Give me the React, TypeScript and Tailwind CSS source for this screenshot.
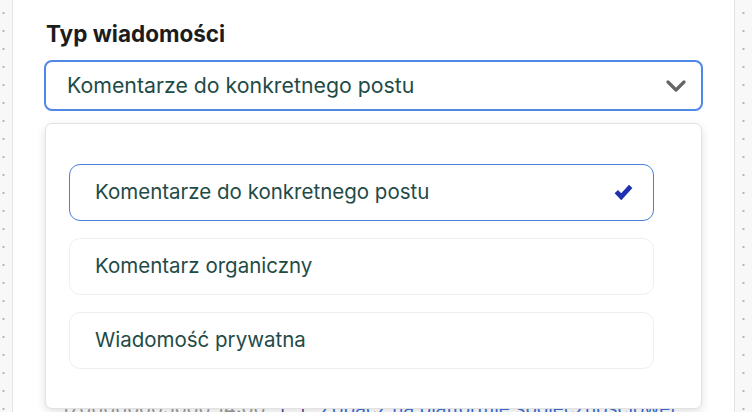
import { useState } from "react"

const options = [
  "Komentarze do konkretnego postu",
  "Komentarz organiczny",
  "Wiadomość prywatna",
]

function Chevron() {
  return (
    <svg width="20" height="12" viewBox="0 0 20 12" fill="none">
      <path d="M2 2l8 8 8-8" stroke="#666" strokeWidth="3.2" strokeLinecap="round" strokeLinejoin="round" />
    </svg>
  )
}

function Check() {
  return (
    <svg width="19" height="17" viewBox="0 0 19 17">
      <path d="M0.6 9.2l3.4-3.2 3.2 3.3L15 0.8l3.4 3.1L7.3 16.2z" fill="#1f30b3" />
    </svg>
  )
}

export default function App() {
  const [selected, setSelected] = useState(0)

  return (
    <div className="flex h-[412px] w-[752px] overflow-hidden bg-white font-['Inter',sans-serif]">
      <div className="w-[13px] shrink-0 border-r border-[#e3e3e3] bg-[#f8f8f8] bg-[radial-gradient(circle,#b4b4b4_0.9px,transparent_1.3px)] bg-[length:7px_18px] bg-[position:0px_4px] bg-repeat-y" />

      <div className="relative flex-1 px-[31px] pt-[20px]">
        <h2 className="pl-[2px] text-[22.5px] font-bold leading-[28px] text-[#1c1c1c]">Typ wiadomości</h2>

        <div className="relative mt-[12px]">
          <button className="flex h-[51px] w-full items-center justify-between rounded-[8px] border-2 border-[#4f88e6] bg-white pl-[21px] pr-[15px] text-left">
            <span className="text-[21.3px] text-[#1f4b47]">{options[selected]}</span>
            <Chevron />
          </button>

          <div className="absolute left-[1px] right-[1px] top-[63px] z-10 rounded-[7px] border border-[#e2e2e2] bg-white pb-[39px] pl-[23px] pr-[47px] pt-[40px] shadow-[0_3px_10px_rgba(0,0,0,0.12)]">
            <ul className="flex flex-col gap-[17px]">
              {options.map((o, i) => (
                <li
                  key={o}
                  onClick={() => setSelected(i)}
                  className={
                    i === selected
                      ? "flex h-[57px] items-center justify-between rounded-[11px] border border-[#4a7fdc] pl-[25px] pr-[20px]"
                      : "flex h-[57px] items-center justify-between rounded-[11px] border border-[#efefef] pl-[25px] pr-[20px]"
                  }
                >
                  <span className="text-[20.5px] text-[#1f4b47]">{o}</span>
                  {i === selected && <Check />}
                </li>
              ))}
            </ul>
          </div>
        </div>

        <div className="mt-[286px] flex items-center gap-[14px] pl-[17px] text-[19px] leading-[24px]">
          <span className="text-[#9a9a9a]">1700000005000 14:00</span>
          <span className="text-[#2a3f8f]">|</span>
          <span className="text-[#2a3f8f]">|</span>
          <span className="text-[#3d6fd8]">Zobacz na platformie społecznościowej</span>
        </div>
      </div>

      <div className="w-[18px] shrink-0 border-l border-[#e3e3e3] bg-[#f8f8f8] bg-[radial-gradient(circle,#b4b4b4_0.9px,transparent_1.3px)] bg-[length:17px_18px] bg-[position:0px_4px] bg-repeat-y" />
    </div>
  )
}
